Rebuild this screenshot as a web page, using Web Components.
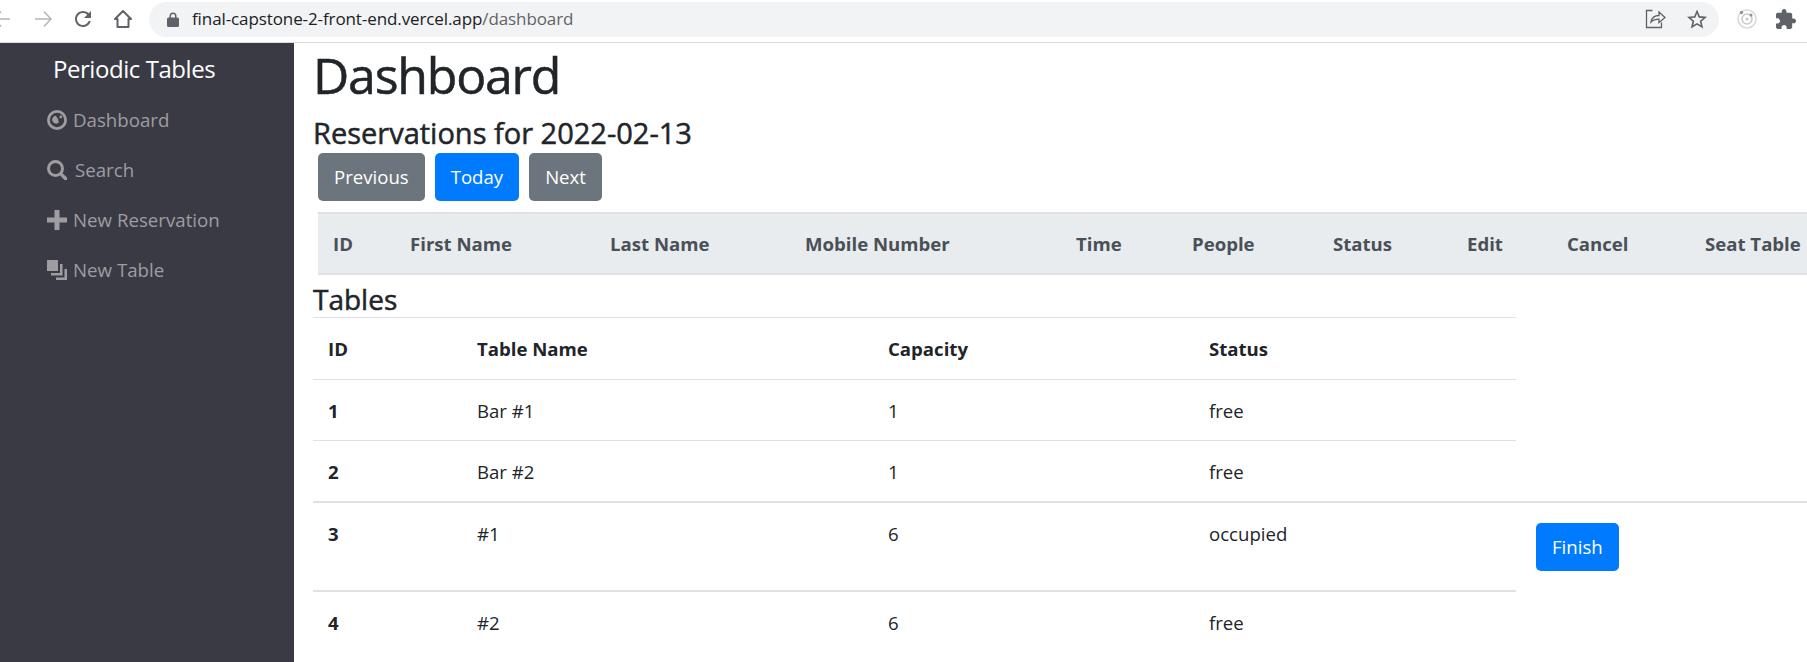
<!DOCTYPE html>
<html lang="en">
<head>
<meta charset="utf-8">
<title>Periodic Tables</title>
<style>
  html, body { margin: 0; height: 100%; }
  body {
    display: flex;
    flex-direction: column;
    overflow: hidden;
    background: #fff;
    color: #212529;
    font-family: "Open Sans", "Noto Sans", sans-serif;
    font-size: 20px;
    line-height: 30px;
  }
</style>
</head>
<body>
<browser-bar url-host="final-capstone-2-front-end.vercel.app" url-path="/dashboard"></browser-bar>
<app-shell>
  <side-menu slot="menu" heading="Periodic Tables">
    <menu-link icon="dashboard">Dashboard</menu-link>
    <menu-link icon="search" gap="8">Search</menu-link>
    <menu-link icon="plus">New Reservation</menu-link>
    <menu-link icon="layers">New Table</menu-link>
  </side-menu>
  <dash-board date="2022-02-13"></dash-board>
</app-shell>

<script>
const ICONS = {
  dashboard: '<path fill-rule="evenodd" d="M10 0a10 10 0 1 0 0 20a10 10 0 0 0 0-20zM10 2.800a7.200 7.200 0 1 1 0 14.400a7.200 7.200 0 0 1 0-14.400z"/><path d="M8.800 5.800a3.900 3.900 0 1 0 3 6.600L11.200 9.200z"/><circle cx="13.800" cy="7" r="1.400"/>',
  search: '<path fill-rule="evenodd" d="M8.500 0a8.500 8.500 0 1 0 0 17a8.500 8.500 0 0 0 0-17zM8.500 3a5.500 5.500 0 1 1 0 11a5.500 5.500 0 0 1 0-11z"/><path d="M13 15.200 15.200 13 20 17.400a1.800 1.800 0 0 1-2.600 2.500z"/>',
  plus: '<path d="M7.500 0h5v7.500H20v5h-7.500V20h-5v-7.500H0v-5h7.500z"/>',
  layers: '<path d="M0 0h11v11H0z"/><path d="M13 4h2.500v11.500H4V13h9z"/><path d="M17.500 9H20v11H9v-2.500h8.500z"/>'
};

class BrowserBar extends HTMLElement {
  connectedCallback() {
    const root = this.attachShadow({ mode: 'open' });
    root.innerHTML = `
      <style>
        :host {
          display: flex;
          align-items: center;
          flex: none;
          box-sizing: border-box;
          height: 43px;
          padding-bottom: 4px;
          background: #fff;
          border-bottom: 1px solid #dadce0;
        }
        svg { display: block; flex: none; }
        .back { margin-left: -9px; }
        .forward { margin-left: 19px; }
        .reload { margin-left: 17px; }
        .home { margin-left: 17px; }
        .omnibox {
          display: flex;
          align-items: center;
          flex: none;
          box-sizing: border-box;
          width: 1570px;
          height: 35px;
          margin-left: 15px;
          padding: 0 12px 0 18px;
          border-radius: 18px;
          background: #f1f3f4;
          font-family: "Open Sans", sans-serif;
          font-size: 17px;
          letter-spacing: -.1px;
          color: #5f6368;
        }
        .url { margin-left: 13px; flex: 1; white-space: nowrap; }
        .url b { font-weight: 400; color: #202124; }
        .star { margin-left: 21px; }
        .profile { margin-left: 18px; }
        .puzzle { margin-left: 19px; }
      </style>
      <svg class="back" width="22" height="22" viewBox="0 0 22 22" fill="none" stroke="#b4b7bb" stroke-width="1.600"><path d="M19 11H3M10 3.500 3 11l7 7.500"/></svg>
      <svg class="forward" width="22" height="22" viewBox="0 0 22 22" fill="none" stroke="#b4b7bb" stroke-width="1.600"><path d="M3 11h16M12 3.500 19 11l-7 7.500"/></svg>
      <svg class="reload" width="24" height="24" viewBox="0 0 24 24" fill="#5f6368"><path d="M17.650 6.350C16.200 4.900 14.210 4 12 4c-4.420 0-7.990 3.580-7.990 8s3.570 8 7.990 8c3.730 0 6.840-2.550 7.730-6h-2.080c-.82 2.330-3.040 4-5.650 4-3.310 0-6-2.690-6-6s2.690-6 6-6c1.660 0 3.140.69 4.220 1.780L13 11h7V4l-2.350 2.350z"/></svg>
      <svg class="home" width="22" height="22" viewBox="0 0 22 22" fill="none" stroke="#5f6368" stroke-width="2"><path d="M11 3 3 11h2.500v8h11v-8H19z" stroke-linejoin="round"/></svg>
      <div class="omnibox">
        <svg width="12" height="15" viewBox="0 0 12 15" fill="#5f6368"><path d="M1.500 5.500h1V4a3.500 3.500 0 0 1 7 0v1.500h1A1.500 1.500 0 0 1 12 7v6.500a1.500 1.500 0 0 1-1.500 1.500h-9A1.500 1.500 0 0 1 0 13.500V7a1.500 1.500 0 0 1 1.500-1.500zM4 5.500h4V4a2 2 0 0 0-4 0z"/></svg>
        <span class="url"><b>${this.getAttribute('url-host')}</b>${this.getAttribute('url-path')}</span>
        <svg width="21" height="20" viewBox="0 0 21 20" fill="none" stroke="#5f6368" stroke-width="1.300"><path d="M7.500 1.500H1.500v17h15v-5M6 13c.8-4 3.500-6.500 8-6.500V3l6 5.500-6 5.200v-3.500c-3.500 0-6 .8-8 2.800z"/></svg>
        <svg class="star" width="20" height="20" viewBox="2 2 20 19" fill="#5f6368"><path d="M22 9.240l-7.190-.62L12 2 9.190 8.630 2 9.240l5.460 4.730L5.820 21 12 17.270 18.180 21l-1.630-7.030L22 9.240zM12 15.400l-3.760 2.270 1-4.280-3.320-2.880 4.380-.38L12 6.100l1.710 4.040 4.380.38-3.320 2.880 1 4.280L12 15.400z"/></svg>
      </div>
      <svg class="profile" width="20" height="20" viewBox="0 0 20 20" fill="none"><circle cx="10" cy="10" r="9" stroke="#d9dadc" stroke-width="1.600"/><circle cx="10" cy="10" r="5" stroke="#c8cacc" stroke-width="1.600"/><circle cx="10" cy="10" r="1.500" fill="#c4c6c8"/><circle cx="4.500" cy="3.500" r="1.700" fill="#8f9296"/><circle cx="14" cy="6" r="1.500" fill="#8f9296"/></svg>
      <svg class="puzzle" width="20" height="20" viewBox="2 1 21 21" fill="#5f6368"><path d="M20.500 11H19V7c0-1.100-.9-2-2-2h-4V3.500C13 2.120 11.880 1 10.500 1S8 2.120 8 3.500V5H4c-1.100 0-1.990.9-1.990 2v3.800H3.500c1.490 0 2.700 1.210 2.700 2.700s-1.210 2.700-2.700 2.700H2V20c0 1.100.9 2 2 2h3.800v-1.500c0-1.490 1.210-2.700 2.700-2.700 1.490 0 2.700 1.210 2.700 2.700V22H17c1.100 0 2-.9 2-2v-4h1.500c1.380 0 2.500-1.120 2.500-2.500S21.880 11 20.500 11z"/></svg>
    `;
  }
}

class AppShell extends HTMLElement {
  constructor() {
    super();
    this.attachShadow({ mode: 'open' }).innerHTML = `
      <style>
        :host { display: flex; flex: 1; min-height: 0; }
        ::slotted(side-menu) { flex: none; width: 294px; }
        .content { flex: 1; min-width: 0; overflow: hidden; }
      </style>
      <slot name="menu"></slot>
      <div class="content"><slot></slot></div>
    `;
  }
}

class SideMenu extends HTMLElement {
  connectedCallback() {
    const root = this.attachShadow({ mode: 'open' });
    root.innerHTML = `
      <style>
        :host { display: block; background: #3a3a44; }
        h1 {
          margin: 0;
          padding: 8px 0 0 53px;
          font-size: 24px;
          font-weight: 400;
          line-height: 36px;
          color: #fff;
          letter-spacing: -.45px;
        }
        nav { display: flex; flex-direction: column; padding: 8px 0 0 47px; }
      </style>
      <h1>${this.getAttribute('heading')}</h1>
      <nav><slot></slot></nav>
    `;
  }
}

class MenuLink extends HTMLElement {
  connectedCallback() {
    const root = this.attachShadow({ mode: 'open' });
    const gap = this.getAttribute('gap') || 6;
    root.innerHTML = `
      <style>
        :host {
          display: flex;
          align-items: center;
          gap: ${gap}px;
          height: 50px;
          color: #9d9da2;
          font-size: 18.700px;
          white-space: nowrap;
        }
        svg { flex: none; fill: #9d9da2; }
      </style>
      <svg width="20" height="20" viewBox="0 0 20 20">${ICONS[this.getAttribute('icon')]}</svg>
      <span><slot></slot></span>
    `;
  }
}

class ActionButton extends HTMLElement {
  constructor() {
    super();
    this.attachShadow({ mode: 'open' }).innerHTML = `
      <style>
        :host {
          display: inline-flex;
          align-items: center;
          box-sizing: border-box;
          height: 48px;
          padding: 0 16px;
          border-radius: 5px;
          background: #6c757d;
          color: #fff;
          font-size: 18.600px;
          white-space: nowrap;
        }
        :host([kind="primary"]) { background: #007bff; }
      </style>
      <slot></slot>
    `;
  }
}

class DataTable extends HTMLElement {
  set data({ cols, head, rows }) {
    const root = this.shadowRoot || this.attachShadow({ mode: 'open' });
    root.innerHTML = `
      <style>
        :host { display: block; }
        table { border-collapse: collapse; table-layout: fixed; font-size: 18.600px; }
        th, td {
          box-sizing: border-box;
          padding: 16px 15px 14px;
          line-height: 30px;
          text-align: left;
          vertical-align: top;
          border-top: 1px solid #dee2e6;
          white-space: nowrap;
        }
        th { font-weight: 700; }
        thead th { padding-top: 16px; padding-bottom: 15px; border-bottom: 1px solid #dee2e6; }
        :host([shade]) thead th {
          padding-top: 15px;
          padding-bottom: 14px;
          background: #e9ecef;
          color: #495057;
          border-top-width: 2px;
          border-bottom-width: 2px;
        }
        tr.heavy > * { border-top-width: 2px; }
        td.action { padding: 20px; }
      </style>
      <table>
        <colgroup>${cols.map(w => `<col style="width:${w}px">`).join('')}</colgroup>
        <thead><tr>${head.map(h => `<th>${h}</th>`).join('')}</tr></thead>
        <tbody></tbody>
      </table>
    `;
    const body = root.querySelector('tbody');
    (rows || []).forEach(row => {
      const tr = document.createElement('tr');
      if (row.heavy) tr.className = 'heavy';
      tr.innerHTML = `<th>${row.cells[0]}</th>` + row.cells.slice(1).map(c => `<td>${c}</td>`).join('');
      if (row.action) {
        const td = document.createElement('td');
        td.className = 'action';
        const btn = document.createElement('action-button');
        btn.setAttribute('kind', 'primary');
        btn.textContent = row.action;
        td.append(btn);
        tr.append(td);
      }
      body.append(tr);
    });
  }
}

class DashBoard extends HTMLElement {
  connectedCallback() {
    const root = this.attachShadow({ mode: 'open' });
    root.innerHTML = `
      <style>
        :host { display: block; padding-left: 19px; width: 1600px; }
        h1 {
          margin: 0 0 10px;
          padding-top: 2px;
          font-size: 50px;
          font-weight: 400;
          line-height: 60px;
          letter-spacing: -1.200px;
          -webkit-text-stroke: .5px currentColor;
        }
        h4 {
          margin: 0;
          font-size: 29px;
          font-weight: 400;
          line-height: 36px;
          -webkit-text-stroke: .5px currentColor;
        }
        .nav { display: flex; gap: 10px; margin: 2px 0 11px 5px; }
        .reservations { margin-left: 5px; }
        .tables-title { margin-top: 6px; height: 36px; font-size: 28px; }
      </style>
      <h1>Dashboard</h1>
      <h4>Reservations for ${this.getAttribute('date')}</h4>
      <div class="nav">
        <action-button>Previous</action-button>
        <action-button kind="primary">Today</action-button>
        <action-button>Next</action-button>
      </div>
      <data-table class="reservations" shade></data-table>
      <h4 class="tables-title">Tables</h4>
      <data-table class="tables"></data-table>
    `;
    root.querySelector('.reservations').data = {
      cols: [77, 200, 195, 271, 116, 141, 134, 100, 138, 125],
      head: ['ID', 'First Name', 'Last Name', 'Mobile Number', 'Time', 'People', 'Status', 'Edit', 'Cancel', 'Seat Table']
    };
    root.querySelector('.tables').data = {
      cols: [149, 411, 321, 322, 291],
      head: ['ID', 'Table Name', 'Capacity', 'Status'],
      rows: [
        { cells: ['1', 'Bar #1', '1', 'free'] },
        { cells: ['2', 'Bar #2', '1', 'free'] },
        { cells: ['3', '#1', '6', 'occupied'], action: 'Finish', heavy: true },
        { cells: ['4', '#2', '6', 'free'], heavy: true }
      ]
    };
  }
}

customElements.define('browser-bar', BrowserBar);
customElements.define('app-shell', AppShell);
customElements.define('side-menu', SideMenu);
customElements.define('menu-link', MenuLink);
customElements.define('action-button', ActionButton);
customElements.define('data-table', DataTable);
customElements.define('dash-board', DashBoard);
</script>
</body>
</html>
